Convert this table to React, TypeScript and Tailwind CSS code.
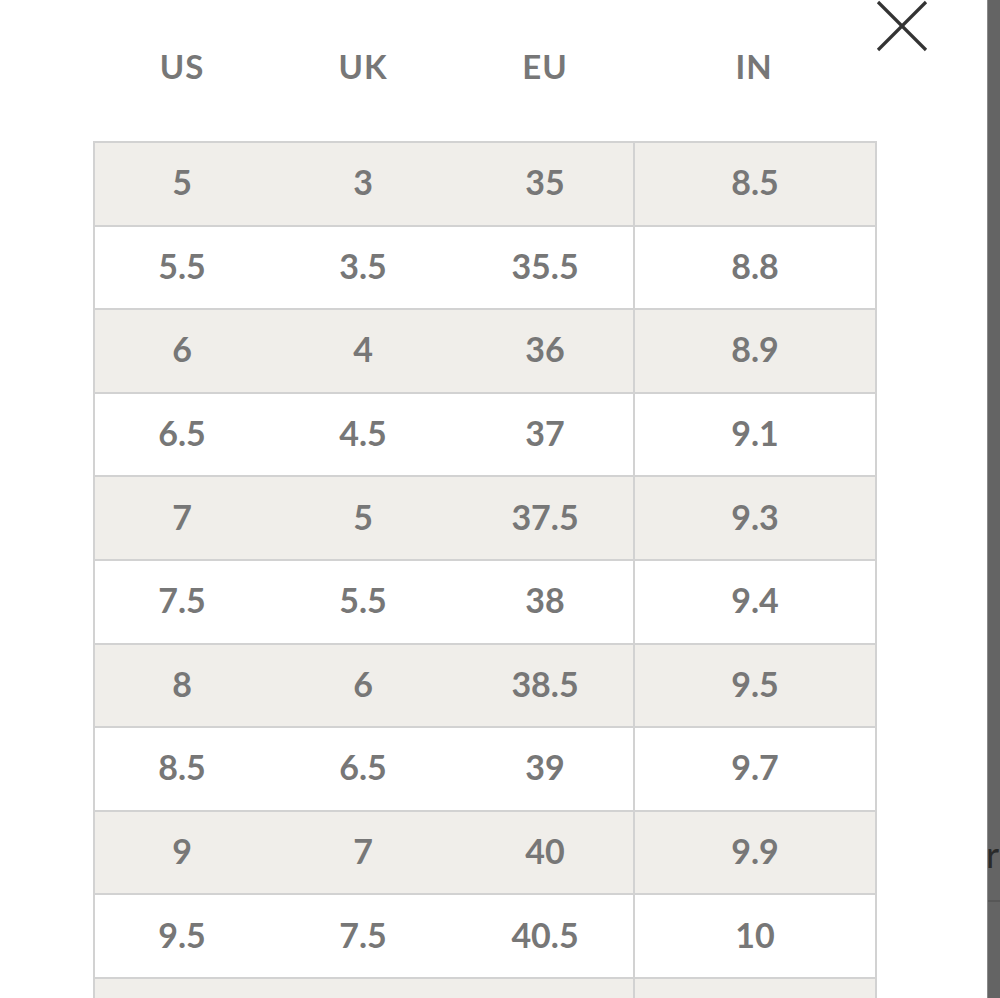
import React from "react";

const rows: [string, string, string, string][] = [
  ["5", "3", "35", "8.5"],
  ["5.5", "3.5", "35.5", "8.8"],
  ["6", "4", "36", "8.9"],
  ["6.5", "4.5", "37", "9.1"],
  ["7", "5", "37.5", "9.3"],
  ["7.5", "5.5", "38", "9.4"],
  ["8", "6", "38.5", "9.5"],
  ["8.5", "6.5", "39", "9.7"],
  ["9", "7", "40", "9.9"],
  ["9.5", "7.5", "40.5", "10"],
  ["", "", "", ""],
];

export default function App() {
  return (
    <div
      className="fixed inset-0 flex overflow-hidden bg-[#646464]"
      style={{ fontFamily: "Lato, 'Noto Sans', sans-serif" }}
    >
      <div className="relative flex-1 min-w-0 h-full overflow-hidden bg-white">
        <button className="absolute left-[874px] top-[-1px] w-[56px] h-[56px]" aria-label="Close">
          <svg width="56" height="56" viewBox="0 0 56 56">
            <line x1="4" y1="3" x2="52" y2="51" stroke="#333333" strokeWidth="3.2" />
            <line x1="52" y1="3" x2="4" y2="51" stroke="#333333" strokeWidth="3.2" />
          </svg>
        </button>
        <div className="ml-[93px] w-[784px] text-[#777777] font-bold">
          <div className="grid grid-cols-[174px_188px_176px_1fr] items-center text-center h-[141px] pb-[8px] text-[33px] tracking-[1px] px-[2px]">
            <div>US</div>
            <div>UK</div>
            <div>EU</div>
            <div>IN</div>
          </div>
          <div className="border-x-2 border-t-2 border-[#d2d2d2]">
            {rows.map((r, i) => (
              <div
                key={i}
                className={`grid grid-cols-[174px_188px_176px_1fr] h-[83.6px] border-b-2 border-[#d2d2d2] text-[34px] ${
                  i % 2 === 0 ? "bg-[#f0eeea]" : "bg-white"
                }`}
              >
                <div className="flex items-center justify-center pb-[4px]">{r[0]}</div>
                <div className="flex items-center justify-center pb-[4px]">{r[1]}</div>
                <div className="flex items-center justify-center pb-[4px]">{r[2]}</div>
                <div className="flex items-center justify-center pb-[4px] border-l-2 border-[#d2d2d2]">
                  {r[3]}
                </div>
              </div>
            ))}
          </div>
        </div>
      </div>
      <div className="shrink-0 w-[13px] h-full bg-[#646464] border-l border-[#8a8a8a] overflow-hidden">
        <div className="h-[836px]" />
        <div className="text-[36px] leading-[36px] text-[#2a2a2a] ml-[-2px]">r</div>
        <div className="h-[28px]" />
        <div className="h-[2px] bg-[#575757]" />
      </div>
    </div>
  );
}
